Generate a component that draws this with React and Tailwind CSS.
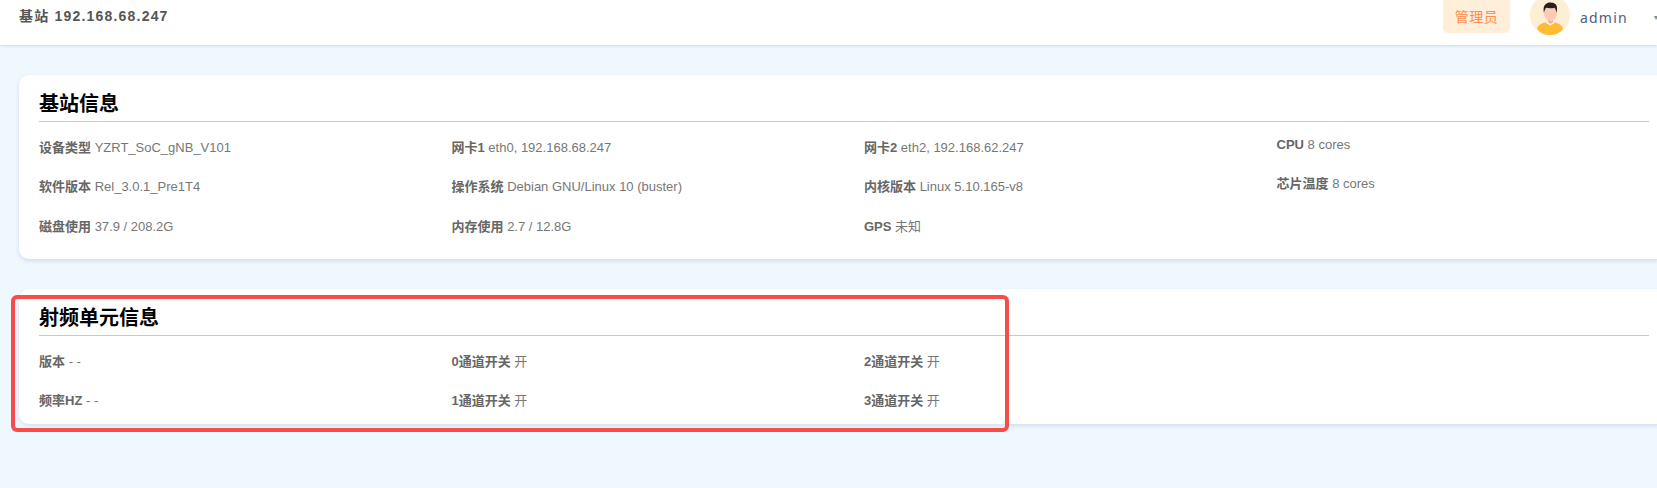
import React from "react";

const baseRows = [
  [
    ["设备类型", "YZRT_SoC_gNB_V101"],
    ["网卡1", "eth0, 192.168.68.247"],
    ["网卡2", "eth2, 192.168.62.247"],
    ["CPU", "8 cores", true],
  ],
  [
    ["软件版本", "Rel_3.0.1_Pre1T4"],
    ["操作系统", "Debian GNU/Linux 10 (buster)"],
    ["内核版本", "Linux 5.10.165-v8"],
    ["芯片温度", "8 cores", true],
  ],
  [
    ["磁盘使用", "37.9 / 208.2G"],
    ["内存使用", "2.7 / 12.8G"],
    ["GPS", "未知"],
  ],
];

const rfRows = [
  [
    ["版本", "- -"],
    ["0通道开关", "开"],
    ["2通道开关", "开"],
  ],
  [
    ["频率HZ", "- -"],
    ["1通道开关", "开"],
    ["3通道开关", "开"],
  ],
];

function Avatar() {
  return (
    <svg width="40" height="40" viewBox="0 0 40 40" className="shrink-0">
      <circle cx="20" cy="20" r="20" fill="#ffeed6" />
      <path d="M7 34c0.500-3.500 3-5 8-6.500l5-1 5 1c5 1.500 7.500 3 8 6.500-3 4-7.500 6-13 6s-10-2-13-6z" fill="#ffbb33" />
      <path d="M17 26.500h6.500l1 1.500-4.300 2.500-4.200-2.500z" fill="#fff" />
      <path d="M18 22h5v5.500l-2.500 1.500-2.500-1.500z" fill="#f5b59c" />
      <ellipse cx="20.500" cy="18" rx="6.500" ry="8" fill="#fdcbb4" />
      <path d="M14 18c-1-5 0-8 2-9 1-1.500 4-2 6-1.200 3 0 5 2.500 5 5 0 2 0 3.500-0.500 5-0.300-2-1-4-2-5-3 0.800-6.500 0.500-8.500 0-1 1.500-1.500 3-2 5z" fill="#2a1f1f" />
    </svg>
  );
}

function InfoRows({ rows }) {
  return (
    <div className="w-[1650px] text-[13px] leading-[18px]">
      {rows.map((row, i) => (
        <div key={i} className="grid grid-cols-4 h-[39.500px] items-center">
          {row.map(([label, value, raised]) => (
            <div key={label} className={raised ? "mb-[6px] text-[#777]" : "text-[#777]"}>
              <span className="font-bold text-[#666]">{label}</span> {value}
            </div>
          ))}
        </div>
      ))}
    </div>
  );
}

export default function App() {
  return (
    <div
      className="relative h-[488px] w-[1657px] overflow-hidden bg-[#eff7ff]"
      style={{ fontFamily: '"Liberation Sans", "Noto Sans CJK SC", sans-serif' }}
    >
      <header className="flex h-[45px] items-center justify-between bg-white pl-[19px] shadow-[0_1px_3px_rgba(0,0,0,0.12)]">
        <div className="-mt-[13px] text-[14px] font-bold tracking-[1.2px] text-[#555]">基站 192.168.68.247</div>
        <div className="-mt-[10px] flex w-[214px] shrink-0 items-center">
          <div className="-mt-[5px] flex h-[36px] w-[67px] shrink-0 items-center justify-center rounded-[5px] bg-[#ffeed8] pt-[5px] text-[14px] tracking-[0.5px] text-[#ff8c4d]">
            管理员
          </div>
          <div className="ml-[20px] -mt-[5px] shrink-0">
            <Avatar />
          </div>
          <span className="ml-[10px] -mt-[1px] shrink-0 text-[14px] tracking-[1.2px] text-[#4f6079]" style={{ fontFamily: '"Noto Sans", sans-serif' }}>
            admin
          </span>
          <span className="ml-[26px] shrink-0 text-[8px] text-[#888]">▾</span>
        </div>
      </header>

      <div className="ml-[19px] mt-[30px] w-[1650px] flex flex-col gap-[30px]">
        <section className="h-[184px] rounded-[10px] bg-white px-[20px] shadow-[0_2px_4px_rgba(100,130,170,0.2)]">
          <h2 className="flex h-[47px] items-end border-b border-[#c8c8c8] pb-[3px] text-[20px] font-bold leading-[28px] text-black">基站信息</h2>
          <div className="pt-[6px]">
            <InfoRows rows={baseRows} />
          </div>
        </section>

        <section className="h-[135px] rounded-[10px] bg-white px-[20px] shadow-[0_2px_4px_rgba(100,130,170,0.2)]">
          <h2 className="flex h-[47px] items-end border-b border-[#c8c8c8] pb-[3px] text-[20px] font-bold leading-[28px] text-black">射频单元信息</h2>
          <div className="pt-[6px]">
            <InfoRows rows={rfRows} />
          </div>
        </section>
      </div>

      <div className="absolute left-[11px] top-[295px] h-[137px] w-[998px] rounded-[6px] border-4 border-[#f84c4a]" />
    </div>
  );
}
